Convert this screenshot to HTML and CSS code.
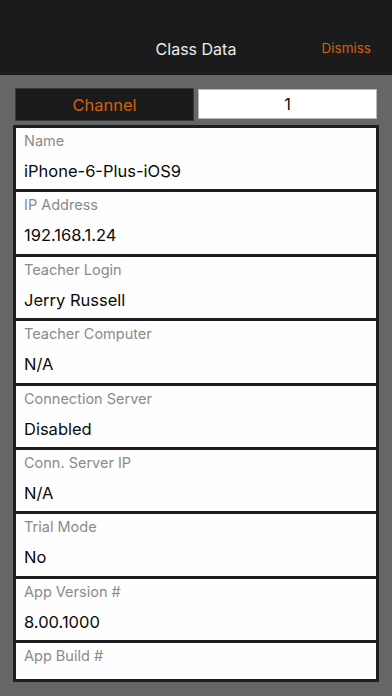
FILE: index.html
```html
<!DOCTYPE html>
<html>
<head>
<meta charset="utf-8">
<link rel="stylesheet" href="styles.css">
</head>
<body>
<div class="header">
  <div class="title">Class Data</div>
  <div class="dismiss">Dismiss</div>
</div>
<div class="channel-row">
  <div class="channel-label">Channel</div>
  <div class="channel-value">1</div>
</div>
<div class="list">
  <div class="cell"><div class="label">Name</div><div class="value">iPhone-6-Plus-iOS9</div></div>
  <div class="cell"><div class="label">IP Address</div><div class="value">192.168.1.24</div></div>
  <div class="cell"><div class="label">Teacher Login</div><div class="value">Jerry Russell</div></div>
  <div class="cell"><div class="label">Teacher Computer</div><div class="value">N/A</div></div>
  <div class="cell"><div class="label">Connection Server</div><div class="value">Disabled</div></div>
  <div class="cell"><div class="label">Conn. Server IP</div><div class="value">N/A</div></div>
  <div class="cell"><div class="label">Trial Mode</div><div class="value">No</div></div>
  <div class="cell"><div class="label">App Version #</div><div class="value">8.00.1000</div></div>
  <div class="cell"><div class="label">App Build #</div><div class="value">7</div></div>
</div>
</body>
</html>
```
FILE: styles.css
```css
html, body {
  margin: 0;
  padding: 0;
}
body {
  width: 392px;
  height: 696px;
  overflow: hidden;
  background: #666666;
  font-family: Inter, "Liberation Sans", sans-serif;
}
.header {
  height: 75px;
  background: #1b1b1b;
  position: relative;
  display: flex;
  align-items: center;
  justify-content: center;
  padding-top: 0;
  box-sizing: border-box;
}
.title {
  color: #ececec;
  font-size: 16px;
  margin-top: 23px;
}
.dismiss {
  position: absolute;
  right: 21px;
  top: 40px;
  color: #d2600c;
  font-size: 13.5px;
}
.channel-row {
  display: flex;
  gap: 4px;
  margin: 13px 15px 0 15px;
  height: 33px;
}
.channel-label {
  flex: 1;
  background: #1b1b1b;
  border: 1px solid #3a3a3a;
  color: #d2600c;
  font-size: 16.5px;
  display: flex;
  align-items: center;
  justify-content: center;
}
.channel-value {
  flex: 1;
  background: #ffffff;
  border: 1px solid #b8b8b8;
  margin: 1px 0 2px 0;
  color: #111;
  font-size: 16.5px;
  display: flex;
  align-items: center;
  justify-content: center;
}
.list {
  margin: 4px 13px 0 13px;
  height: 557px;
  box-sizing: border-box;
  border: 3px solid #1e1e1e;
  background: #1e1e1e;
  display: flex;
  flex-direction: column;
  gap: 3px;
  overflow: hidden;
}
.cell {
  flex: 0 0 61.4px;
  background: #fefefe;
  padding-left: 8px;
  box-sizing: border-box;
}
.label {
  color: #8a8a8a;
  font-size: 14.5px;
  margin-top: 4px;
  line-height: 18px;
}
.value {
  color: #0a0a0a;
  font-size: 16.5px;
  margin-top: 11px;
  line-height: 20px;
}
```
